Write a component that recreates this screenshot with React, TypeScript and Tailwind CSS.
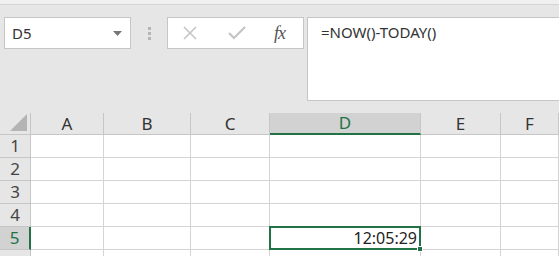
import React from "react";

const cols = [
  { name: "A", w: "w-[73px]" },
  { name: "B", w: "w-[87px]" },
  { name: "C", w: "w-[79px]" },
  { name: "D", w: "w-[151px]" },
  { name: "E", w: "w-[80px]" },
  { name: "F", w: "flex-1" },
];

const rows = [1, 2, 3, 4, 5, 6];

function Toolbar() {
  return (
    <div className="h-[113px] bg-[#e6e6e6]">
      <div className="h-[5px] bg-[#f0f0f0] border-b border-[#d4d4d4]" />
      <div className="flex items-start pt-[12px] pl-[4px]">
        <div className="flex items-center justify-between w-[127px] h-[32px] bg-white border border-[#c6c6c6] pl-[7px] pr-[8px]">
          <span className="text-[15px] text-[#333]">D5</span>
          <svg width="9" height="5" viewBox="0 0 9 5">
            <path d="M0 0h9L4.5 5z" fill="#777" />
          </svg>
        </div>
        <div className="flex flex-col gap-[2px] ml-[17px] mr-[16px] mt-[10px]">
          <span className="w-[3px] h-[3px] bg-[#b5b5b5]" />
          <span className="w-[3px] h-[3px] bg-[#b5b5b5]" />
          <span className="w-[3px] h-[3px] bg-[#b5b5b5]" />
        </div>
        <div className="flex items-center w-[137px] h-[32px] bg-white border border-[#c6c6c6]">
          <svg className="ml-[14px]" width="16" height="16" viewBox="0 0 16 16">
            <path d="M2 2l12 12M14 2L2 14" stroke="#c4c4c4" strokeWidth="1.6" />
          </svg>
          <svg className="ml-[30px]" width="18" height="16" viewBox="0 0 18 16">
            <path d="M1 8l5 5L17 2" stroke="#c4c4c4" strokeWidth="2.2" fill="none" />
          </svg>
          <span className="ml-[28px] italic text-[18px] text-[#555] font-['Liberation_Serif',serif] tracking-[-1px]">
            fx
          </span>
        </div>
        <div className="ml-[3px] flex-1 h-[84px] bg-white border border-[#c6c6c6] border-r-0 pl-[13px] pt-[2px]">
          <span className="text-[15px] text-[#333]">=NOW()-TODAY()</span>
        </div>
      </div>
    </div>
  );
}

function Grid() {
  return (
    <div className="flex flex-col bg-white">
      <div className="flex h-[22px] bg-[#e6e6e6]">
        <div className="w-[31px] border-r border-[#c6c6c6] border-b flex items-end justify-end pr-[3px] pb-[3px]">
          <svg width="17" height="17" viewBox="0 0 17 17">
            <path d="M17 0V17H0z" fill="#b4b4b4" />
          </svg>
        </div>
        {cols.map((c) =>
          c.name === "D" ? (
            <div
              key={c.name}
              className={`${c.w} bg-[#d2d2d2] border-r border-[#c6c6c6] border-b-2 border-b-[#217346] flex items-center justify-center text-[17px] text-[#217346]`}
            >
              {c.name}
            </div>
          ) : (
            <div
              key={c.name}
              className={`${c.w} border-r border-[#c6c6c6] border-b border-b-[#c6c6c6] flex items-center justify-center text-[17px] text-[#333]`}
            >
              {c.name}
            </div>
          )
        )}
      </div>
      {rows.map((r) => (
        <div key={r} className="flex h-[23px]">
          {r === 5 ? (
            <div className="w-[31px] bg-[#d2d2d2] border-b border-[#c6c6c6] border-r-2 border-r-[#217346] flex items-center justify-center text-[17px] text-[#217346]">
              {r}
            </div>
          ) : (
            <div className="w-[31px] bg-[#e6e6e6] border-b border-r border-[#c6c6c6] flex items-center justify-center text-[17px] text-[#444]">
              {r < 6 ? r : ""}
            </div>
          )}
          {cols.map((c) => (
            <div key={c.name} className={`${c.w} relative border-r border-b border-[#d4d4d4]`}>
              {r === 5 && c.name === "D" && (
                <div className="absolute left-[-1px] top-[-1px] right-[-1px] bottom-[-1px] border-2 border-[#217346] flex items-center justify-end pr-[2px] text-[16px] text-[#222] z-10">
                  12:05:29
                  <span className="absolute right-[-4px] bottom-[-4px] w-[6px] h-[6px] bg-[#217346] border border-white" />
                </div>
              )}
            </div>
          ))}
        </div>
      ))}
    </div>
  );
}

export default function App() {
  return (
    <div className="w-[559px] h-[256px] overflow-hidden bg-[#e6e6e6] font-['Noto_Sans','Noto_Sans_CJK_SC',sans-serif]">
      <Toolbar />
      <Grid />
    </div>
  );
}
